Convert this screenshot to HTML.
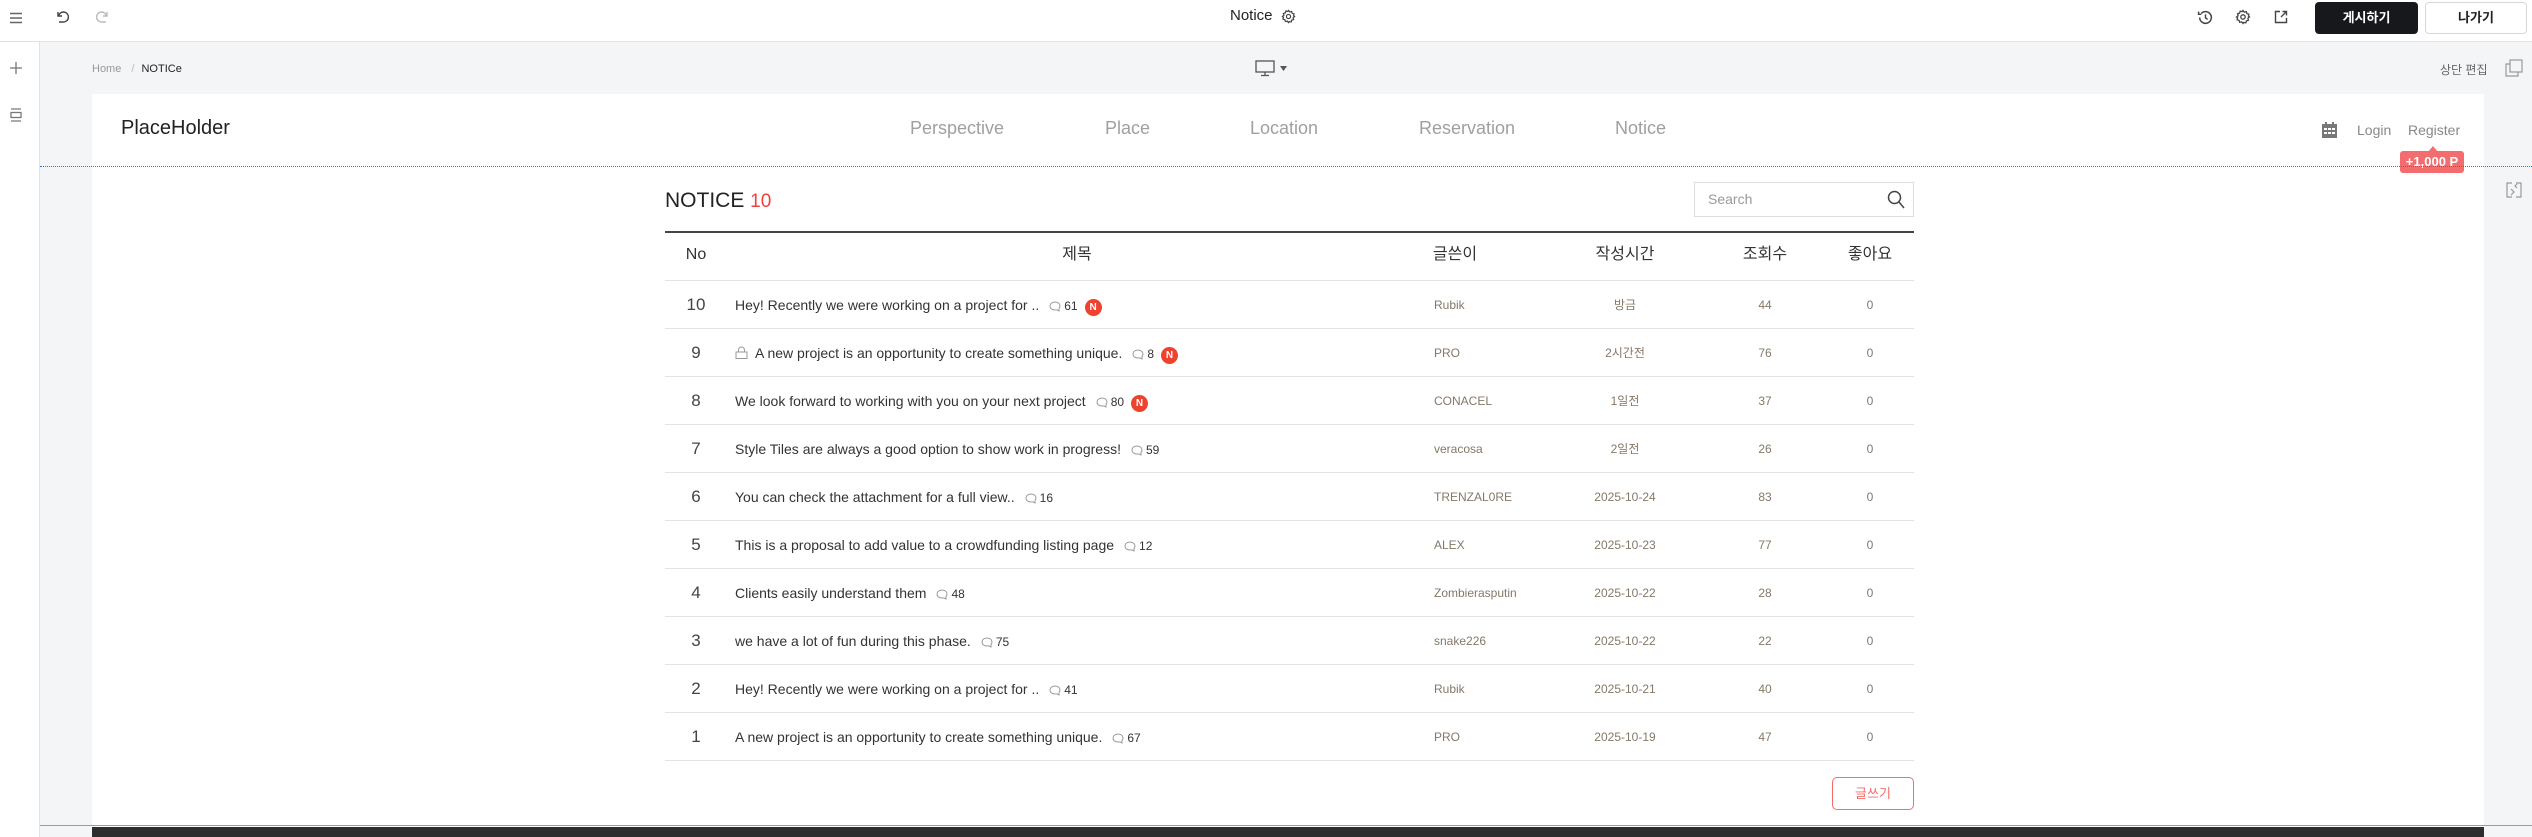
<!DOCTYPE html>
<html><head><meta charset="utf-8"><style>
*{margin:0;padding:0;box-sizing:border-box}
body{width:2532px;height:837px;overflow:hidden;background:#f4f5f7;font-family:"Liberation Sans","Noto Sans CJK KR",sans-serif;position:relative;color:#333}
.abs{position:absolute}
#top{left:0;top:0;width:2532px;height:42px;background:#fff;border-bottom:1px solid #e2e3e6}
#side{left:0;top:42px;width:40px;height:795px;background:#fff;border-right:1px solid #e2e3e6}
#panel{left:92px;top:94px;width:2392px;height:743px;background:#fff}
.nav{top:118px;font-size:18px;color:#a0a0a0}
.hd{top:244px;height:22px;line-height:22px;font-size:16px;color:#333;text-align:center}
.row{left:665px;width:1249px;height:48px;border-bottom:1px solid #e3e3e3}
.row>span{position:absolute;top:0;line-height:48px}
.no{left:0;width:62px;text-align:center;font-size:17px;color:#444}
.t{left:70px;font-size:14px;color:#333;white-space:nowrap}
.au{left:769px;font-size:12px;color:#857868}
.dt{left:900px;width:120px;text-align:center;font-size:12px;color:#857868}
.vw{left:1070px;width:60px;text-align:center;font-size:12px;color:#857868}
.lk{left:1180px;width:50px;text-align:center;font-size:12px;color:#857868}
.cm{font-size:12px;color:#333;margin-left:10px}
.cm svg{vertical-align:-2px;margin-right:3px}
.n{display:inline-block;width:17px;height:17px;border-radius:50%;background:#f0412e;color:#fff;font-size:10px;font-weight:bold;text-align:center;line-height:17px;margin-left:7px;vertical-align:0px}
</style></head><body>
<div id="top" class="abs"></div>
<svg class="abs" style="left:8px;top:10px" width="16" height="16" viewBox="0 0 16 16"><path d="M2 3.5h12M2 8h12M2 12.5h12" stroke="#666" stroke-width="1.6"/></svg>
<svg class="abs" style="left:55px;top:9px" width="16" height="16" viewBox="0 0 16 16" fill="none" stroke="#444" stroke-width="1.4"><path d="M3 3v4h4"/><path d="M3.5 7A5 5 0 1 1 8 13H4"/></svg>
<svg class="abs" style="left:94px;top:9px" width="16" height="16" viewBox="0 0 16 16" fill="none" stroke="#bbb" stroke-width="1.4"><path d="M13 3v4H9"/><path d="M12.5 7A5 5 0 1 0 8 13h4"/></svg>
<div class="abs" style="left:1230px;top:7px;font-size:15px;color:#222">Notice</div>
<svg class="abs" style="left:1281px;top:9px" width="15" height="15" viewBox="0 0 16 16" fill="none" stroke="#444" stroke-width="1.3"><circle cx="8" cy="8" r="2.2"/><path d="M8 1.5l1.3 1.6 2-.5.6 2 2 .6-.5 2L14.5 8l-1.6 1.3.5 2-2 .6-.6 2-2-.5L8 14.5l-1.3-1.6-2 .5-.6-2-2-.6.5-2L1.5 8l1.6-1.3-.5-2 2-.6.6-2 2 .5z"/></svg>
<svg class="abs" style="left:2197px;top:9px" width="17" height="17" viewBox="0 0 16 16" fill="none" stroke="#444" stroke-width="1.4"><path d="M2.5 8A5.5 5.5 0 1 0 4 4.2"/><path d="M1.5 2.5v2.5h2.5M8 5v3.3l2 1.5"/></svg>
<svg class="abs" style="left:2235px;top:9px" width="16" height="16" viewBox="0 0 16 16" fill="none" stroke="#444" stroke-width="1.3"><circle cx="8" cy="8" r="2.2"/><path d="M8 1.5l1.3 1.6 2-.5.6 2 2 .6-.5 2L14.5 8l-1.6 1.3.5 2-2 .6-.6 2-2-.5L8 14.5l-1.3-1.6-2 .5-.6-2-2-.6.5-2L1.5 8l1.6-1.3-.5-2 2-.6.6-2 2 .5z"/></svg>
<svg class="abs" style="left:2273px;top:9px" width="16" height="16" viewBox="0 0 16 16" fill="none" stroke="#444" stroke-width="1.4"><path d="M7 2.5H2.5v11h11V9"/><path d="M9.5 2.5h4v4M13.5 2.5L8 8"/></svg>
<div class="abs" style="left:2315px;top:2px;width:103px;height:32px;background:#17181b;border-radius:4px;color:#fff;font-size:13px;font-weight:bold;text-align:center;line-height:32px">게시하기</div>
<div class="abs" style="left:2425px;top:2px;width:102px;height:32px;background:#fff;border:1px solid #d5d7db;border-radius:4px;color:#222;font-size:13px;font-weight:bold;text-align:center;line-height:30px">나가기</div>

<div id="side" class="abs"></div>
<svg class="abs" style="left:8px;top:60px" width="16" height="16" viewBox="0 0 16 16"><path d="M8 2v12M2 8h12" stroke="#777" stroke-width="1.3"/></svg>
<svg class="abs" style="left:8px;top:107px" width="16" height="16" viewBox="0 0 16 16" fill="none" stroke="#777" stroke-width="1.3"><path d="M3 2h10M3 14h10"/><rect x="3" y="5.5" width="10" height="5"/></svg>

<div class="abs" style="left:92px;top:63px;font-size:11px;color:#999">Home <span style="margin:0 7px;color:#bbb">/</span><span style="color:#222">NOTICe</span></div>
<svg class="abs" style="left:1255px;top:60px" width="20" height="17" viewBox="0 0 20 17" fill="none" stroke="#555" stroke-width="1.3"><rect x="1" y="1" width="18" height="11"/><path d="M10 12v3M6 15.5h8"/></svg>
<svg class="abs" style="left:1280px;top:66px" width="7" height="5"><path d="M0 0h7L3.5 5z" fill="#555"/></svg>
<div class="abs" style="left:2440px;top:61px;font-size:12px;color:#666">상단 편집</div>
<svg class="abs" style="left:2505px;top:59px" width="18" height="18" viewBox="0 0 18 18" fill="none" stroke="#999" stroke-width="1.2"><rect x="5" y="1" width="12" height="12"/><path d="M5 5H1v12h12v-4"/></svg>
<svg class="abs" style="left:2505px;top:181px" width="18" height="18" viewBox="0 0 18 18" fill="none" stroke="#999" stroke-width="1.2"><path d="M7 2H2v14h5M11 2h5v14h-5M6 8l3 3-3 3M12 3l-2 2 2 2"/></svg>

<div id="panel" class="abs"></div>
<div class="abs" style="left:121px;top:117px;font-size:20px;color:#222">PlaceHolder</div>
<div class="abs nav" style="left:910px">Perspective</div>
<div class="abs nav" style="left:1105px">Place</div>
<div class="abs nav" style="left:1250px">Location</div>
<div class="abs nav" style="left:1419px">Reservation</div>
<div class="abs nav" style="left:1615px">Notice</div>
<svg class="abs" style="left:2322px;top:122px" width="15" height="16" viewBox="0 0 15 16"><rect x="0" y="2" width="15" height="14" fill="#777"/><rect x="3" y="0" width="2" height="4" fill="#777"/><rect x="10" y="0" width="2" height="4" fill="#777"/><g fill="#fff"><rect x="2" y="6" width="3" height="2"/><rect x="6" y="6" width="3" height="2"/><rect x="10" y="6" width="3" height="2"/><rect x="2" y="10" width="3" height="2"/><rect x="6" y="10" width="3" height="2"/><rect x="10" y="10" width="3" height="2"/></g></svg>
<div class="abs" style="left:2357px;top:122px;font-size:14px;color:#888">Login</div>
<div class="abs" style="left:2408px;top:122px;font-size:14px;color:#888">Register</div>
<div class="abs" style="left:2400px;top:151px;width:64px;height:22px;background:#f36d6e;border-radius:3px;color:#fff;font-size:13px;font-weight:bold;text-align:center;line-height:22px">+1,000 P</div>
<svg class="abs" style="left:2428px;top:146px" width="10" height="6"><path d="M0 6L5 0l5 6z" fill="#f36d6e"/></svg>
<div class="abs" style="left:40px;top:166px;width:2492px;border-top:1px dotted #2f6fe0"></div>

<div class="abs" style="left:665px;top:189px;font-size:21px;color:#222">NOTICE <span style="color:#f0413e;font-size:19px">10</span></div>
<div class="abs" style="left:1694px;top:182px;width:220px;height:35px;border:1px solid #ddd;font-size:14px;color:#999;line-height:33px;padding-left:13px">Search</div>
<svg class="abs" style="left:1887px;top:190px" width="18" height="19" viewBox="0 0 18 19" fill="none" stroke="#444" stroke-width="1.5"><circle cx="7.5" cy="7.5" r="6"/><path d="M12 12l5 6"/></svg>

<div class="abs" style="left:665px;top:231px;width:1249px;height:50px;border-top:2px solid #444;border-bottom:1px solid #e3e3e3"></div>
<div class="abs hd" style="left:665px;width:62px">No</div>
<div class="abs hd" style="left:1050px;width:54px">제목</div>
<div class="abs hd" style="left:1425px;width:60px">글쓴이</div>
<div class="abs hd" style="left:1590px;width:70px">작성시간</div>
<div class="abs hd" style="left:1735px;width:60px">조회수</div>
<div class="abs hd" style="left:1840px;width:60px">좋아요</div>

<div class="abs row" style="top:281px"><span class="no">10</span><span class="t">Hey! Recently we were working on a project for ..<span class="cm"><svg width="12" height="11" viewBox="0 0 12 11" fill="none" stroke="#999"><path d="M6 1C3 1 1 2.8 1 5s2 4 5 4c.6 0 1 0 1.5-.2L10 10V7.5C10.6 6.8 11 6 11 5c0-2.2-2-4-5-4z"/></svg>61</span><span class="n">N</span></span><span class="au">Rubik</span><span class="dt">방금</span><span class="vw">44</span><span class="lk">0</span></div>
<div class="abs row" style="top:329px"><span class="no">9</span><span class="t"><svg width="13" height="13" viewBox="0 0 13 13" fill="none" stroke="#999" style="vertical-align:-1px;margin-right:7px"><rect x="1" y="6" width="11" height="6.5"/><path d="M3.5 6V4a3 3 0 0 1 6 0v2"/></svg>A new project is an opportunity to create something unique.<span class="cm"><svg width="12" height="11" viewBox="0 0 12 11" fill="none" stroke="#999"><path d="M6 1C3 1 1 2.8 1 5s2 4 5 4c.6 0 1 0 1.5-.2L10 10V7.5C10.6 6.8 11 6 11 5c0-2.2-2-4-5-4z"/></svg>8</span><span class="n">N</span></span><span class="au">PRO</span><span class="dt">2시간전</span><span class="vw">76</span><span class="lk">0</span></div>
<div class="abs row" style="top:377px"><span class="no">8</span><span class="t">We look forward to working with you on your next project<span class="cm"><svg width="12" height="11" viewBox="0 0 12 11" fill="none" stroke="#999"><path d="M6 1C3 1 1 2.8 1 5s2 4 5 4c.6 0 1 0 1.5-.2L10 10V7.5C10.6 6.8 11 6 11 5c0-2.2-2-4-5-4z"/></svg>80</span><span class="n">N</span></span><span class="au">CONACEL</span><span class="dt">1일전</span><span class="vw">37</span><span class="lk">0</span></div>
<div class="abs row" style="top:425px"><span class="no">7</span><span class="t">Style Tiles are always a good option to show work in progress!<span class="cm"><svg width="12" height="11" viewBox="0 0 12 11" fill="none" stroke="#999"><path d="M6 1C3 1 1 2.8 1 5s2 4 5 4c.6 0 1 0 1.5-.2L10 10V7.5C10.6 6.8 11 6 11 5c0-2.2-2-4-5-4z"/></svg>59</span></span><span class="au">veracosa</span><span class="dt">2일전</span><span class="vw">26</span><span class="lk">0</span></div>
<div class="abs row" style="top:473px"><span class="no">6</span><span class="t">You can check the attachment for a full view..<span class="cm"><svg width="12" height="11" viewBox="0 0 12 11" fill="none" stroke="#999"><path d="M6 1C3 1 1 2.8 1 5s2 4 5 4c.6 0 1 0 1.5-.2L10 10V7.5C10.6 6.8 11 6 11 5c0-2.2-2-4-5-4z"/></svg>16</span></span><span class="au">TRENZAL0RE</span><span class="dt">2025-10-24</span><span class="vw">83</span><span class="lk">0</span></div>
<div class="abs row" style="top:521px"><span class="no">5</span><span class="t">This is a proposal to add value to a crowdfunding listing page<span class="cm"><svg width="12" height="11" viewBox="0 0 12 11" fill="none" stroke="#999"><path d="M6 1C3 1 1 2.8 1 5s2 4 5 4c.6 0 1 0 1.5-.2L10 10V7.5C10.6 6.8 11 6 11 5c0-2.2-2-4-5-4z"/></svg>12</span></span><span class="au">ALEX</span><span class="dt">2025-10-23</span><span class="vw">77</span><span class="lk">0</span></div>
<div class="abs row" style="top:569px"><span class="no">4</span><span class="t">Clients easily understand them<span class="cm"><svg width="12" height="11" viewBox="0 0 12 11" fill="none" stroke="#999"><path d="M6 1C3 1 1 2.8 1 5s2 4 5 4c.6 0 1 0 1.5-.2L10 10V7.5C10.6 6.8 11 6 11 5c0-2.2-2-4-5-4z"/></svg>48</span></span><span class="au">Zombierasputin</span><span class="dt">2025-10-22</span><span class="vw">28</span><span class="lk">0</span></div>
<div class="abs row" style="top:617px"><span class="no">3</span><span class="t">we have a lot of fun during this phase.<span class="cm"><svg width="12" height="11" viewBox="0 0 12 11" fill="none" stroke="#999"><path d="M6 1C3 1 1 2.8 1 5s2 4 5 4c.6 0 1 0 1.5-.2L10 10V7.5C10.6 6.8 11 6 11 5c0-2.2-2-4-5-4z"/></svg>75</span></span><span class="au">snake226</span><span class="dt">2025-10-22</span><span class="vw">22</span><span class="lk">0</span></div>
<div class="abs row" style="top:665px"><span class="no">2</span><span class="t">Hey! Recently we were working on a project for ..<span class="cm"><svg width="12" height="11" viewBox="0 0 12 11" fill="none" stroke="#999"><path d="M6 1C3 1 1 2.8 1 5s2 4 5 4c.6 0 1 0 1.5-.2L10 10V7.5C10.6 6.8 11 6 11 5c0-2.2-2-4-5-4z"/></svg>41</span></span><span class="au">Rubik</span><span class="dt">2025-10-21</span><span class="vw">40</span><span class="lk">0</span></div>
<div class="abs row" style="top:713px"><span class="no">1</span><span class="t">A new project is an opportunity to create something unique.<span class="cm"><svg width="12" height="11" viewBox="0 0 12 11" fill="none" stroke="#999"><path d="M6 1C3 1 1 2.8 1 5s2 4 5 4c.6 0 1 0 1.5-.2L10 10V7.5C10.6 6.8 11 6 11 5c0-2.2-2-4-5-4z"/></svg>67</span></span><span class="au">PRO</span><span class="dt">2025-10-19</span><span class="vw">47</span><span class="lk">0</span></div>

<div class="abs" style="left:1832px;top:777px;width:82px;height:33px;border:1px solid #f36d6e;border-radius:5px;color:#f36d6e;font-size:13px;text-align:center;line-height:31px">글쓰기</div>
<div class="abs" style="left:40px;top:825px;width:2492px;border-top:1px solid #6ea0ee"></div>
<div class="abs" style="left:92px;top:827px;width:2392px;height:10px;background:#2d2d2d"></div>
</body></html>
